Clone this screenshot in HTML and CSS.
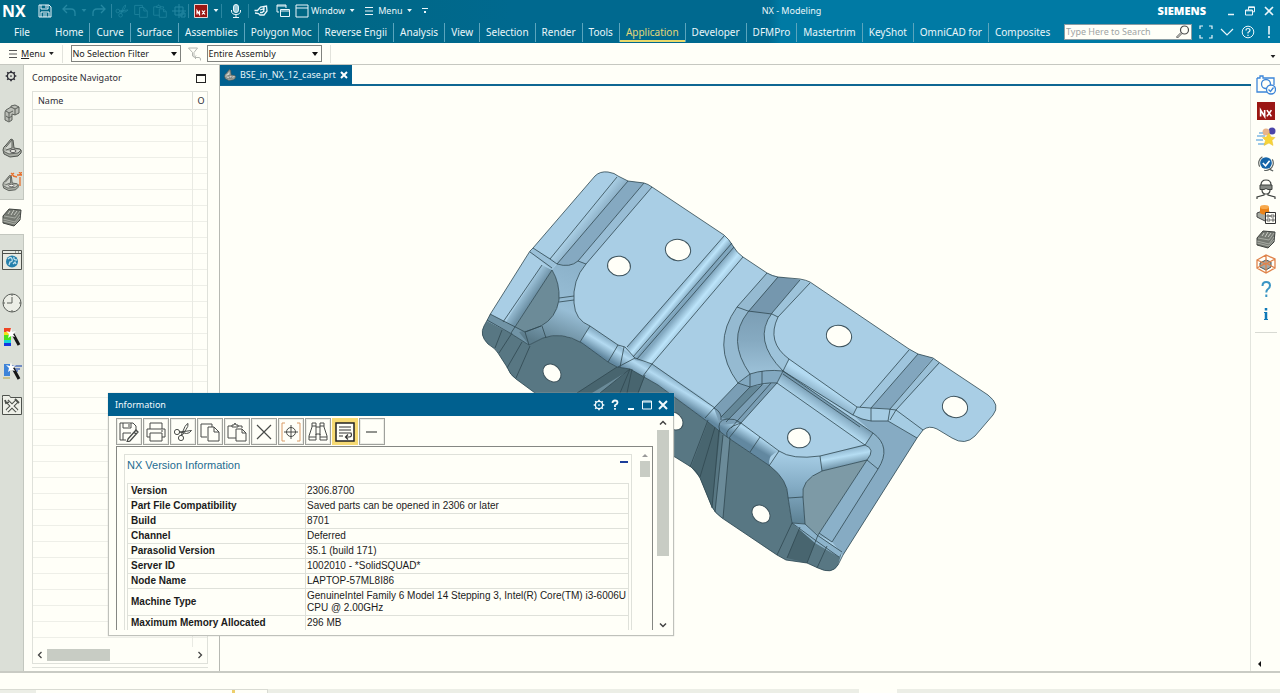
FILE: index.html
```html
<!DOCTYPE html>
<html lang="en">
<head>
<meta charset="utf-8">
<title>NX - Modeling</title>
<link rel="stylesheet" href="styles.css">
</head>
<body>
<svg class="defs" aria-hidden="true">
  <defs>
    <symbol id="gear" viewBox="0 0 14 14"><circle cx="7" cy="7" r="4.2" fill="none" stroke="currentColor" stroke-width="1.5"/><circle cx="7" cy="7" r="1" fill="currentColor"/><path d="M7 .8v2M7 11.2v2M.8 7h2M11.2 7h2M2.6 2.6l1.4 1.4M10 10l1.4 1.4M2.6 11.4L4 10M10 4l1.4-1.4" stroke="currentColor" stroke-width="1.9"/></symbol>
    <symbol id="copy" viewBox="0 0 20 20"><path d="M12 5V2H1v13h6" fill="none" stroke="currentColor"/><path d="M8 5h6l5 5v9H8zM14 5v5h5" fill="none" stroke="currentColor"/></symbol>
    <symbol id="paste" viewBox="0 0 20 20"><path d="M9 16H1V4h4M11 4h4v2M5 5V3h2l1-2 1 2h2v2z" fill="none" stroke="currentColor"/><path d="M9 7h6l4 4v8H9zM15 7v4h4" fill="none" stroke="currentColor"/></symbol>
    <symbol id="cut" viewBox="0 0 20 20"><circle cx="4" cy="10" r="2.6" fill="none" stroke="currentColor"/><circle cx="8" cy="16" r="2.6" fill="none" stroke="currentColor"/><path d="M6.500 10l12-1.500q-2 3-5 3L6.500 10M8 13.500l4-9q2-3 3-3 .5 3-2 6l-4 6" fill="none" stroke="currentColor"/></symbol>
    <symbol id="target" viewBox="0 0 20 20"><path d="M4 1H1v18h3M16 1h3v18h-3" fill="none" stroke="#d99b66"/><circle cx="10" cy="10" r="4.500" fill="none" stroke="currentColor"/><path d="M10 3v14M3 10h14" stroke="currentColor"/></symbol>
    <symbol id="bracket" viewBox="0 0 20 20"><path d="M1 12Q1 9 4 7L9 1l2 1 1 8 6 1q2 1 1 4l-3 3-8 1-6-3z" fill="#a8aca4" stroke="#50544f"/><path d="M4 9l6-7v8l-6 2M1 13l6 3 9-1 3-3" fill="#d0d3cc" stroke="#60645f"/><ellipse cx="11" cy="13" rx="3" ry="1.500" fill="#f0f1ea" stroke="#555"/></symbol>
    <symbol id="laminate" viewBox="0 0 20 20"><path d="M1 9L7 2l12 1-1 10-6 6-11-3z" fill="#757972" stroke="#3f433f"/><path d="M2 9l11 2 5-7M1 12l12 3 5-7M1 14l12 3 5-6" fill="none" stroke="#b4b8af" stroke-width=".8"/><path d="M6 7l2-3M9 8l3-5M12 8l3-4" stroke="#c9ccc4"/></symbol>
    <symbol id="wand" viewBox="0 0 20 20"><path d="M11 7l6 11" stroke="#161616" stroke-width="3"/><path d="M9 1l1 4 4-1-3 3 2 3-4-1-3 2 1-4-3-3 4 1z" fill="#fff"/></symbol>
    <symbol id="nxmark" viewBox="0 0 20 20"><path d="M0 0h20v20H0z" fill="#9b1713"/><path d="M4 16V9l4.500 7V9M11 9l5 7M16 9l-5 7" fill="none" stroke="#fff" stroke-width="1.800"/></symbol>
  </defs>
</svg>

<header class="chrome">
  <div class="titlebar">
    <span class="brand">NX</span>
    <button class="tool wide" aria-label="Save"><svg class="i14" viewBox="0 0 14 14"><path d="M1 1h10l2 2v10H1zM3 1v4h7V1M8 1v3M3 13V8h8v5M5 10h4M5 12h4" fill="none" stroke="currentColor"/></svg></button>
    <button class="tool wide dim" aria-label="Undo"><svg class="i14" viewBox="0 0 14 14"><path d="M5 1L1 5l4 4M1 5h8q4 0 4 4v3" fill="none" stroke="currentColor" stroke-width="1.300"/></svg></button>
    <span class="caret dim"></span>
    <button class="tool wide dim" aria-label="Redo"><svg class="i14" viewBox="0 0 14 14"><path d="M9 1l4 4-4 4M13 5H5Q1 5 1 9v3" fill="none" stroke="currentColor" stroke-width="1.300"/></svg></button>
    <span class="bar"></span>
    <button class="tool dim" aria-label="Cut"><svg class="i14"><use href="#cut"/></svg></button>
    <button class="tool dim" aria-label="Copy"><svg class="i14"><use href="#copy"/></svg></button>
    <button class="tool dim" aria-label="Paste"><svg class="i14"><use href="#paste"/></svg></button>
    <button class="tool dim" aria-label="Repeat command"><svg class="i14" viewBox="0 0 14 14"><path d="M7 0v14M0 7h14M3 3h8v8H3zM9 9h4v4H9z" fill="none" stroke="currentColor"/></svg></button>
    <span class="bar"></span>
    <button class="tool wide" aria-label="NX"><svg class="i14" viewBox="0 0 14 14"><path d="M.5.5h13v13H.5z" fill="#9b1713" stroke="#e9d5d2"/><path d="M3 10.500v-4l2.500 4v-4M8 6.500l3 4M11 6.500l-3 4" fill="none" stroke="#fff" stroke-width="1.200"/></svg></button>
    <span class="caret"></span>
    <span class="bar gap"></span>
    <button class="tool wide" aria-label="Voice"><svg class="i14" viewBox="0 0 14 14"><rect x="4.500" y=".5" width="5" height="8" rx="2.500" fill="#9ccbd8" stroke="currentColor"/><path d="M2.500 6v1q0 3.500 4.500 3.500T11.500 7V6M7 10.500V13M4 13.500h6" fill="none" stroke="currentColor"/></svg></button>
    <span class="bar"></span>
    <button class="tool wide" aria-label="Touch mode"><svg class="i14" viewBox="0 0 14 14"><path d="M.5 6.500h3l3-3.500 6-1 .5 5-3 4H6L4.500 9.500 1 9M6 6l3-1 1 2-2 1.500H6M10 3v3" fill="none" stroke="currentColor" stroke-width="1.300"/></svg></button>
    <button class="tool" aria-label="Switch window"><svg class="i14" viewBox="0 0 14 14"><path d="M3 8H1V1h9v3M1 2h9M4.500 5.500h9v7h-9zM4 7h10" fill="none" stroke="currentColor"/></svg></button>
    <button class="tool" aria-label="Window"><svg class="i14" viewBox="0 0 14 14"><path d="M1 1h12v12H1zM1 4h12" fill="none" stroke="currentColor"/></svg></button>
    <button class="textbtn">Window <span class="caret"></span></button>
    <button class="textbtn"><svg class="i10" viewBox="0 0 10 10"><path d="M1 1.500h8M1 5h8M1 8.500h8" stroke="currentColor"/></svg> Menu <span class="caret"></span></button>
    <span class="caret over"></span>
    <span class="apptitle">NX - Modeling</span>
    <strong class="maker">SIEMENS</strong>
    <div class="winctl">
      <button aria-label="Minimize"><svg class="i10" viewBox="0 0 10 10"><path d="M2 8.500h6" stroke="currentColor" stroke-width="1.500"/></svg></button>
      <button aria-label="Restore"><svg class="i10" viewBox="0 0 10 10"><path d="M3.500 4V.8h6v5H7.500M.5 4h7v5h-7zM.5 4.800h7M3.500 1.500h6" fill="none" stroke="currentColor"/></svg></button>
      <button aria-label="Close"><svg class="i10" viewBox="0 0 10 10"><path d="M1 1l8 8M9 1L1 9" stroke="currentColor" stroke-width="1.600"/></svg></button>
    </div>
  </div>
  <nav class="ribbon">
    <button class="tab file">File</button>
    <button class="tab">Home</button>
    <button class="tab">Curve</button>
    <button class="tab">Surface</button>
    <button class="tab">Assemblies</button>
    <button class="tab">Polygon Moc</button>
    <button class="tab">Reverse Engii</button>
    <button class="tab">Analysis</button>
    <button class="tab">View</button>
    <button class="tab">Selection</button>
    <button class="tab">Render</button>
    <button class="tab">Tools</button>
    <button class="tab on">Application</button>
    <button class="tab">Developer</button>
    <button class="tab">DFMPro</button>
    <button class="tab">Mastertrim</button>
    <button class="tab">KeyShot</button>
    <button class="tab">OmniCAD for</button>
    <button class="tab last">Composites</button>
    <div class="search">
      <input type="search" placeholder="Type Here to Search" aria-label="Search commands">
      <svg class="i14" viewBox="0 0 14 14"><circle cx="8.500" cy="5" r="4" fill="none" stroke="#4c4c4c" stroke-width="1.200"/><path d="M6 8.500l-4.500 4.500L.5 12 5 7.500" fill="none" stroke="#4c4c4c"/></svg>
    </div>
    <div class="ribctl">
      <button aria-label="Full screen"><svg class="i14" viewBox="0 0 14 14"><path d="M4 1H1v3M10 1h3v3M4 13H1v-3M10 13h3v-3" fill="none" stroke="currentColor" stroke-width="1.200"/></svg></button>
      <button aria-label="Collapse ribbon"><svg class="i14" viewBox="0 0 14 14"><path d="M1 4l6 6 6-6" fill="none" stroke="currentColor" stroke-width="1.200"/></svg></button>
      <button aria-label="Help"><svg class="i14" viewBox="0 0 14 14"><circle cx="7" cy="7" r="5.800" fill="none" stroke="currentColor"/><path d="M5 5.500q0-2 2-2t2 1.800Q9 6.500 7 7.500v1M7 9.800v1.200" fill="none" stroke="currentColor" stroke-width="1.200"/></svg></button>
      <button aria-label="Alerts"><svg class="i14" viewBox="0 0 14 14"><path d="M7 1v8.500M7 11v2" stroke="currentColor" stroke-width="1.600"/></svg></button>
    </div>
  </nav>
</header>

<div class="selbar">
  <button class="menubtn"><svg class="i10" viewBox="0 0 10 10"><path d="M1 1.500h8M1 5h8M1 8.500h8" stroke="#555"/></svg><span><u>M</u>enu</span><span class="caret"></span></button>
  <span class="vbar"></span>
  <span class="combo"><select aria-label="Type filter"><option>No Selection Filter</option></select></span>
  <svg class="i14 funnel" viewBox="0 0 14 14"><path d="M.5 1h9L6 5.500V10L4.500 9V5.500zM8 8.500l-1.500 2L8 12M7 10.500h4q2 0 1.500 3" fill="none" stroke="#b4b6b0"/></svg>
  <span class="combo"><select aria-label="Selection scope"><option>Entire Assembly</option></select></span>
  <span class="vbar"></span>
  <span class="caret end"></span>
</div>

<main class="work">
  <aside class="rail">
    <button aria-label="Settings" class="first"><svg class="i12"><use href="#gear"/></svg></button>
    <button aria-label="Assembly Navigator"><svg class="i20" viewBox="0 0 20 20"><path d="M4 6l5-3 0-1 4-1 4 2v6l-4 2-3-1v6l-3 2-4-2V8z" fill="#b9bcb5" stroke="#5c605b"/><path d="M4 7l3 2 4-2M7 9v8M4 12l3 2 3-2M9 3l4 2 4-2M13 5v6" fill="none" stroke="#5c605b"/></svg></button>
    <button aria-label="Part Navigator"><svg class="i20"><use href="#bracket"/></svg></button>
    <button aria-label="Constraint Navigator"><svg class="i20" viewBox="0 0 20 20"><use href="#bracket" y="2" width="17" height="18"/><path d="M9 1l3 3M12 1L9 4M15 3h5M17 0l3 3M20 0l-3 3M18 5v9M11 4l4 1" stroke="#e8722f" stroke-width="1.300"/></svg></button>
    <button aria-label="Composite Navigator" class="active"><svg class="i20"><use href="#laminate"/></svg></button>
    <button aria-label="Web browser" class="web"><svg class="i20" viewBox="0 0 20 20"><path d="M.5.5h19v19H.5z" fill="#e8eae2" stroke="#4e524d"/><path d="M1 3.500h18M13 2h1M16 2h1" stroke="#4e524d"/><circle cx="10" cy="11.500" r="6" fill="#2480ac"/><path d="M6 9q3-3 4 0t-2 3l-1 3M12 7q-1 3 3 3M11 14l2-2 1 2" fill="none" stroke="#bfe0ec" stroke-width="1.300"/></svg></button>
    <button aria-label="History" class="history"><svg class="i20" viewBox="0 0 20 20"><circle cx="10" cy="10" r="9" fill="#eceee6" stroke="#5a5e59"/><path d="M10 4v6H5M10 1v2M10 17v2M1 10h2M17 10h2" fill="none" stroke="#5a5e59"/></svg></button>
    <button aria-label="Materials"><svg class="i20" viewBox="0 0 20 20"><path d="M2 1h7v4H2z" fill="#ef4423"/><path d="M2 5h7v3H2z" fill="#f5e11a"/><path d="M2 8h7v5H2z" fill="#4be31e"/><path d="M2 13h7v3H2z" fill="#18d4d8"/><path d="M2 16h7v3H2z" fill="#1634e0"/><use href="#wand" width="20" height="20"/></svg></button>
    <button aria-label="Process Studio"><svg class="i20" viewBox="0 0 20 20"><path d="M2 3h6v12H2z" fill="#3e84d8"/><path d="M9 5h11M10 8h8M11 10h5" stroke="#5173bd" stroke-width="1.500"/><path d="M1 17h7" stroke="#c9c28e" stroke-width="2"/><use href="#wand" width="20" height="20"/></svg></button>
    <button aria-label="Roles"><svg class="i20" viewBox="0 0 20 20"><path d="M.5 2.500V.5h7l1 2h11v17H.5z" fill="#eef0e8" stroke="#4e524d"/><path d="M5 6l10 10M15 6L5 16" stroke="#4e524d" stroke-width="4"/><path d="M5 6l10 10M15 6L5 16" stroke="#f6f7f0" stroke-width="1.800"/><path d="M3 5l1 3 3-1M13 4l4 4" fill="none" stroke="#4e524d" stroke-width="1.800"/></svg></button>
  </aside>

  <section class="navigator">
    <h2>Composite Navigator <button aria-label="Undock"></button></h2>
    <div class="tree">
      <table><thead><tr><th>Name</th><th class="o">O</th></tr></thead></table>
      <div class="rows"><span></span></div>
      <div class="hscroll"><svg viewBox="0 0 6 8"><path d="M4.500 1L1.500 4l3 3" fill="none" stroke="#444" stroke-width="1.300"/></svg><i></i><svg viewBox="0 0 6 8"><path d="M1.500 1l3 3-3 3" fill="none" stroke="#444" stroke-width="1.300"/></svg></div>
    </div>
  </section>

  <section class="stage">
    <div class="doctabs"><button class="doc"><svg class="i12"><use href="#bracket"/></svg>BSE_in_NX_12_case.prt<svg class="i8" viewBox="0 0 8 8"><path d="M1 1l6 6M7 1L1 7" stroke="#fff" stroke-width="2"/></svg></button></div>
    <div class="canvas">
      <svg class="part" viewBox="480 170 520 405" role="img" aria-label="Sheet metal part">
        <defs>
          <path id="body" d="M595 176Q600 171 608 172 615 173 618 176L628 181 644 183Q648 184 652 187L724 235Q729 239 733 246 737 253 743 257L767 273Q772 276 778 277L800 279Q806 280 810 282L909 349 918 354 933 358 940 363 988 395Q1001 405 993 415L975 436Q965 446 952 438L937 429Q929 425 923 430L917 438 843 555 838 565Q832 575 818 568L807 563 786 560 777 555 722 518Q715 513 712 507L700 478Q697 471 691 467L675 457 600 430 535 393 516 379Q510 375 507 367L498 353Q496 349 488 344 479 335 484 326L491 313 530 251 533 248Z"/>
          <linearGradient id="fold" gradientUnits="userSpaceOnUse" x1="676" y1="380" x2="667" y2="395"><stop offset="0" stop-color="#8db4cc"/><stop offset=".35" stop-color="#b3daf1"/><stop offset="1" stop-color="#6288a0"/></linearGradient>
          <linearGradient id="chan" gradientUnits="userSpaceOnUse" x1="584" y1="218" x2="594" y2="226"><stop offset="0" stop-color="#a9cee4"/><stop offset="1" stop-color="#88abc2"/></linearGradient>
          <linearGradient id="bead" gradientUnits="userSpaceOnUse" x1="675" y1="291" x2="699" y2="311"><stop offset="0" stop-color="#8cb2ca"/><stop offset=".2" stop-color="#bce4fa"/><stop offset=".42" stop-color="#7fa5bd"/><stop offset=".55" stop-color="#82a8c0"/><stop offset=".8" stop-color="#bce4fa"/><stop offset="1" stop-color="#a2c8df"/></linearGradient>
          <linearGradient id="leftw" gradientUnits="userSpaceOnUse" x1="522" y1="292" x2="532" y2="299"><stop offset="0" stop-color="#a5cbe2"/><stop offset="1" stop-color="#6f93a8"/></linearGradient>
          <linearGradient id="blend" gradientUnits="userSpaceOnUse" x1="575" y1="270" x2="545" y2="345"><stop offset="0" stop-color="#8db3cb"/><stop offset=".5" stop-color="#98bed6"/><stop offset="1" stop-color="#5b7b8a"/></linearGradient>
          <linearGradient id="arc" gradientUnits="userSpaceOnUse" x1="755" y1="290" x2="755" y2="375"><stop offset="0" stop-color="#7496ad"/><stop offset=".6" stop-color="#86aac1"/><stop offset="1" stop-color="#9dc2d9"/></linearGradient>
          <linearGradient id="rim" gradientUnits="userSpaceOnUse" x1="828" y1="402" x2="820" y2="414"><stop offset="0" stop-color="#7296ac"/><stop offset=".4" stop-color="#8fb5cc"/><stop offset="1" stop-color="#b3daf0"/></linearGradient>
          <linearGradient id="ridge" gradientUnits="userSpaceOnUse" x1="824" y1="386" x2="818" y2="396"><stop offset="0" stop-color="#b3daf1"/><stop offset="1" stop-color="#86abc2"/></linearGradient>
          <linearGradient id="yblend" gradientUnits="userSpaceOnUse" x1="800" y1="456" x2="798" y2="525"><stop offset="0" stop-color="#a4cbe3"/><stop offset=".45" stop-color="#83abc4"/><stop offset="1" stop-color="#5b7f91"/></linearGradient>
          <linearGradient id="arm" gradientUnits="userSpaceOnUse" x1="843" y1="450" x2="846" y2="466"><stop offset="0" stop-color="#93bad2"/><stop offset=".4" stop-color="#b5ddf3"/><stop offset="1" stop-color="#7195aa"/></linearGradient>
        </defs>
        <use href="#body" fill="#a9cee5"/>
        <path fill="url(#chan)" d="M617 176L628 181 557 264 550 259z"/>
        <path fill="#85a9c1" d="M628 181L644 183 578 261 570 266 557 264z"/>
        <path fill="#98bdd5" d="M644 183L652 187 586 264 578 261z"/>
        <path fill="#9ac0d8" d="M533 248L557 262 552 270 530 252z"/>
        <path fill="url(#leftw)" d="M542 265L552 270 511 333 502 328z"/>
        <path fill="#6c8b98" d="M552 270Q560 283 559 300 556 318 541 326L525 332 511 333z"/>
        <path fill="#587783" d="M487 321L510 333 529 345 543 338Q562 331 582 343L608 362 617 367 630 369 658 385 708 422 727 437 770 466Q788 480 788 497L792 523 805 526 817 535 842 552 838 565Q832 575 818 568L807 563 786 560 777 555 722 518Q715 513 712 507L700 478Q697 471 691 467L675 457 600 430 535 393 516 379Q510 375 507 367L498 353Q496 349 488 344 479 335 484 326z"/>
        <path fill="#7194a6" d="M490 314L525 332 529 345 510 333 487 321z"/>
        <path fill="#48656f" d="M617 367L630 369 645 375 638 395 577 393zM708 422L720 432 712 508 700 478 691 467zM800 527L818 536 807 563 787 558z"/>
        <path fill="#6b8b99" d="M628 371L600 393 592 393zM723 435L730 438 723 518 715 512z"/>
        <path fill="url(#blend)" d="M557 264L570 266 578 261 586 264Q572 280 574 303 575 320 590 326L580 342Q562 331 543 338L529 345 519 332 541 326Q556 318 559 300 560 283 552 270z"/>
        <path fill="url(#fold)" d="M590 326L618 345 635 358 652 364 703 398 715 408 741 423 779 451Q766 456 770 466L727 437 708 422 658 385 630 369 617 367 608 362 580 342z"/>
        <path fill="url(#bead)" d="M724 236Q729 239 733 246 737 253 743 257L652 364 635 360 627 347z"/>
        <path fill="#95bad1" d="M767 273L778 277 748 312Q726 340 750 374L738 383Q710 345 737 307z"/>
        <path fill="url(#arc)" d="M778 277L800 280 772 313Q752 340 783 371L762 371 750 374Q726 340 748 312z"/>
        <path fill="#7597ae" d="M778 277L800 280 772 313 748 312z"/>
        <path fill="#9dc3da" d="M800 280L810 283 778 317Q766 342 789 359L783 371Q752 340 772 313z"/>
        <path fill="url(#ridge)" d="M789 359L857 407 853 416 783 371z"/>
        <path fill="#86abc3" d="M853 415L871 421 888 421 917 438 843 555 832 542 884 455 873 433z"/>
        <path fill="#9fc5dd" d="M909 349L918 354 871 408 860 407z"/>
        <path fill="#82a6be" d="M918 354L933 358 890 409 871 408z"/>
        <path fill="#9ac0d7" d="M933 358L940 363 896 410 890 409z"/>
        <path fill="#a5cce3" d="M857 407L870 408 888 409 896 410 923 430 917 438 888 421 871 421 853 416z"/>
        <path fill="#83a9c1" d="M738 383L750 374 762 371 783 371 777 383 762 385 750 387z"/>
        <path fill="#7a9eb5" d="M738 383L750 387 762 385 777 383 741 423 720 425 714 408z"/>
        <path fill="#648798" d="M750 387L762 385 728 420 721 417z"/>
        <path fill="url(#rim)" d="M783 371L873 433 865 445 777 383z"/>
        <path fill="#8eb4cb" d="M873 433Q892 447 878 469L867 460Q874 452 865 445z"/>
        <path fill="#7d9aa6" d="M867 460L822 471Q800 480 803 497L805 525 818 535z"/>
        <path fill="#8bb1c9" d="M867 460L878 469 832 542 818 535z"/>
        <path fill="url(#yblend)" d="M779 451Q792 460 820 456L822 471Q800 480 803 497L805 524 792 523 788 497Q788 480 770 466z"/>
        <path fill="url(#arm)" d="M820 456L865 444Q876 449 867 460L822 471z"/>
        <path fill="#8db4cc" d="M792 523L805 524 818 535 842 552 839 557 815 543z"/>
        <g fill="none" stroke="#304750" stroke-width=".8">
          <use href="#body"/>
          <path d="M617 177L550 259M628 181L557 264M644 183L578 261M652 187L586 264M533 248L550 259 557 264Q570 268 578 261L586 264M530 252L552 268M542 265L503 322M552 270L511 333M552 270Q560 283 559 300 556 318 541 326L525 332M586 264Q572 280 574 303 575 320 590 326M559 298L574 296M559 302L574 300"/>
          <path d="M490 314L525 332 541 326M487 320L510 333 529 345 543 338Q562 331 582 343L608 362 617 367 630 369 658 385 708 422 727 437 770 466Q788 480 788 497L792 523 777 555M525 332L529 345M542 326L546 338M502 330L495 348M512 333L499 353M522 342L507 368M530 346L516 378"/>
          <path d="M590 326L618 345 625 347 635 358 652 364 715 408M590 326L580 342M618 345L608 362M624 347L620 367M635 358L618 367M652 364L643 376M617 367L577 393M630 369L600 393M630 369L620 393M632 369L627 393M645 375L638 393"/>
          <path d="M724 236L627 347M732 243L633 357M734 247L637 359M743 257L652 364"/>
          <path d="M767 273L737 307Q710 345 738 383L714 408M778 277L748 312Q726 340 750 374M800 280L772 313Q752 340 783 371M810 283L778 317Q766 342 789 359L857 407 870 408 888 409 896 410 923 430M737 307L748 311 772 314 778 317M789 359L783 371 853 415 862 419 871 421 888 421 917 438M857 407L853 415M871 408V421M890 409L888 421M896 410L890 420"/>
          <path d="M909 350L860 407M918 354L871 408M933 359L890 409M939 363L896 410M738 383L750 374Q765 369 783 371L777 383Q765 382 750 387zM750 374V387M762 371V385M750 387L721 417M762 385L726 422M771 383L731 428M777 383L741 423M777 383L865 445M783 371L873 433Q892 447 878 469L832 542M783 374L860 427"/>
          <path d="M714 408Q722 412 721 420M714 408L705 418M720 432Q716 420 727 419 735 418 741 423L760 437 779 451Q792 460 820 456L865 445 873 433M727 437Q724 428 741 423M741 423L729 438M760 437L750 452M779 451L769 466M820 456L822 471M865 445Q876 449 867 460L822 471Q800 480 803 497L805 524 792 523M867 460L878 469M867 460L818 535M788 498L803 497M805 524L817 535 842 552M792 523L815 540 839 557"/>
          <path d="M708 420L690 467M715 427L700 477M719 430L712 508M723 435L715 512M730 438L723 518M800 527L787 558M818 535L807 563M827 546L817 568M819 533L832 542"/>
        </g>
        <g fill="#fffff8" stroke="#3c525c">
          <ellipse cx="619" cy="266" rx="11.500" ry="9.800" transform="rotate(10 619 266)"/><ellipse cx="678" cy="250" rx="12.700" ry="10.600" transform="rotate(10 678 250)"/><ellipse cx="839" cy="336" rx="12.700" ry="10.700" transform="rotate(12 839 336)"/><ellipse cx="955" cy="407" rx="12.700" ry="10.500" transform="rotate(12 955 407)"/><ellipse cx="799" cy="438" rx="11.500" ry="9.800" transform="rotate(10 799 438)"/><ellipse cx="552" cy="373" rx="10" ry="8" transform="rotate(45 552 373)"/><ellipse cx="761" cy="514" rx="10" ry="8" transform="rotate(45 761 514)"/><ellipse cx="674" cy="421" rx="10" ry="8" transform="rotate(45 674 421)"/>
        </g>
      </svg>
    </div>
  </section>

  <aside class="dock">
    <button aria-label="Capture"><svg class="i20" viewBox="0 0 20 20"><path d="M1 3h3V1h3v2h11v7M1 3v14h11" fill="none" stroke="#3d86d8" stroke-width="1.300"/><circle cx="10" cy="9" r="4.500" fill="none" stroke="#3d86d8" stroke-width="1.300"/><circle cx="15" cy="14.500" r="4.500" fill="#fffff8" stroke="#3d86d8" stroke-width="1.300"/><path d="M12.500 14.500l2 2 3-4" fill="none" stroke="#3d86d8" stroke-width="1.300"/></svg></button>
    <button aria-label="NX"><svg class="i18"><use href="#nxmark"/></svg></button>
    <button aria-label="Quick start"><svg class="i20" viewBox="0 0 20 20"><circle cx="16" cy="4" r="3.500" fill="#4b45a8"/><circle cx="10" cy="5" r="3.500" fill="#e8b48a"/><path d="M1 9h8M0 13h7M2 17h8M3 6h4" stroke="#7fb8e2" stroke-width="1.500"/><path d="M13 6l2 4 4 .5-3 3 1 5-4-2.500-5 2.500 1.500-5-3-3 4-.5z" fill="#f7d437" stroke="#e8be2e" stroke-width=".5"/></svg></button>
    <button aria-label="Validate"><svg class="i18" viewBox="0 0 20 20"><path d="M3 14A8 8 0 0 1 6 3M17 6a8 8 0 0 1-3 11M8 18q3 1 6-1l4 2" fill="none" stroke="#5a605e" stroke-width="1.300"/><circle cx="10" cy="10" r="6.500" fill="#1464a8"/><path d="M6.500 10l3 3 4.500-5.500" fill="none" stroke="#fff" stroke-width="1.800"/></svg></button>
    <button aria-label="Virtual reality"><svg class="i20" viewBox="0 0 20 20"><path d="M5 9V6q0-5 5-5t5 5v3M6 11q0 4 4 4t4-4M8 14v2L1 18v2M12 14v2l7 2v2" fill="none" stroke="#3e423e" stroke-width="1.200"/><path d="M4 6h12v4.500h-4L10 9.500 8 10.500H4z" fill="#858983" stroke="#3e423e"/></svg></button>
    <button aria-label="Options"><svg class="i20" viewBox="0 0 20 20"><path d="M1 9l8-3 6 3v5l-6 3-8-4z" fill="#a6aaa2" stroke="#444"/><path d="M4 3v6q4 3 9 0V3z" fill="#ea8319"/><ellipse cx="8.500" cy="3" rx="4.500" ry="2" fill="#f8a94c"/><path d="M9.500 8.500h10v11h-10z" fill="#fffff8" stroke="#333"/><path d="M11 11h2v2h-2zM15 11h3v2h-3zM11 15h3v2h-3zM16 15h2v2h-2zM13 12h2" fill="none" stroke="#333" stroke-width=".7"/></svg></button>
    <button aria-label="Laminate"><svg class="i20"><use href="#laminate"/></svg></button>
    <button aria-label="Envelope"><svg class="i20" viewBox="0 0 20 20"><path d="M4 9l6-3 5 2v5l-5 3-6-3z" fill="#a3aaa8" stroke="#4d5656"/><path d="M1 6l9-5 9 4v9l-9 5-9-5zM1 6l9 4 9-5M10 10v9M10 1v7M1 14l9-5 9 5" fill="none" stroke="#e0834a" stroke-width="1.300"/></svg></button>
    <button aria-label="Help"><svg class="i18" viewBox="0 0 18 18"><path d="M5.500 6q0-4 3.700-4T13 5.500Q13 8 10.500 9.500 9.300 10.500 9.300 12.500M9.300 14.500V17" fill="none" stroke="#3a95c4" stroke-width="2"/></svg></button>
    <button aria-label="Info"><svg class="i18" viewBox="0 0 18 18"><path d="M9 3v2.500M9 7v8" stroke="#0f79b8" stroke-width="2.500"/><path d="M7 7.500h2M7 14.500h4" stroke="#0f79b8"/></svg></button>
    <hr>
    <span class="leftcaret"></span>
  </aside>
</main>

<footer class="status"><span class="cue"></span><span class="msg"></span><span class="end"></span></footer>

<section class="dialog" role="dialog" aria-labelledby="dlg">
  <header><h2 id="dlg">Information</h2>
    <button aria-label="Dialog options"><svg class="i12"><use href="#gear"/></svg></button>
    <button aria-label="Help"><svg class="i12" viewBox="0 0 12 12"><path d="M3.500 4q0-2.500 2.500-2.500t2.500 2.300Q8.500 5.200 6 6.300V8M6 9v1.800" fill="none" stroke="currentColor" stroke-width="1.800"/></svg></button>
    <button aria-label="Minimize"><svg class="i12" viewBox="0 0 12 12"><path d="M3 10h6" stroke="currentColor" stroke-width="2"/></svg></button>
    <button aria-label="Maximize"><svg class="i12" viewBox="0 0 12 12"><path d="M1.500 2h9v8h-9zM1.500 3h9" fill="none" stroke="currentColor"/></svg></button>
    <button aria-label="Close"><svg class="i12" viewBox="0 0 12 12"><path d="M2 2l8 8M10 2l-8 8" stroke="currentColor" stroke-width="2"/></svg></button>
  </header>
  <div class="dbody">
    <div class="dmain">
      <div class="dtools">
        <button aria-label="Save As"><svg class="i20" viewBox="0 0 20 20"><path d="M1 1h13l3 3v4M1 1v17h6M4 1v5h8V1M10 2v3M4 18v-7h8" fill="none" stroke="currentColor"/><path d="M9 17l8-9 2 2-8 9-3 1zM15 10l2 2" fill="none" stroke="currentColor" stroke-width="1.300"/></svg></button>
        <button aria-label="Print"><svg class="i20" viewBox="0 0 20 20"><path d="M4 7V1h12v6M4 15H1V7h18v8h-3M4 11h12v8H4zM15 9h2" fill="none" stroke="currentColor"/></svg></button>
        <button aria-label="Cut"><svg class="i20"><use href="#cut"/></svg></button>
        <button aria-label="Copy"><svg class="i20"><use href="#copy"/></svg></button>
        <button aria-label="Paste"><svg class="i20"><use href="#paste"/></svg></button>
        <button aria-label="Delete"><svg class="i20" viewBox="0 0 20 20"><path d="M3 3l14 14M17 3L3 17" stroke="currentColor" stroke-width="1.200"/></svg></button>
        <button aria-label="Select all"><svg class="i20"><use href="#target"/></svg></button>
        <button aria-label="Find"><svg class="i20" viewBox="0 0 20 20"><path d="M4 1h4v4h4V1h4l0 4 3 9v4h-7v-6H8v6H1v-4l3-9zM1 15h7M12 15h7M4 4h4M12 4h4M8 5v8M12 5v8" fill="none" stroke="currentColor"/></svg></button>
        <button aria-label="Word wrap" class="on"><svg class="i20" viewBox="0 0 20 20"><path d="M1 1h18v18H1z" fill="#fffff8" stroke="#222" stroke-width="1.500"/><path d="M4 5h12M4 8h12M4 11h12q1.500 4-2 4h-3M13 12.500L10.500 15l2.500 2.500M4 14h4" fill="none" stroke="#333" stroke-width="1.200"/></svg></button>
        <button aria-label="Collapse all"><svg class="i20" viewBox="0 0 20 20"><path d="M4 10h11" stroke="currentColor" stroke-width="1.200"/></svg></button>
      </div>
      <div class="frame">
        <div class="report">
          <h3>NX Version Information <button aria-label="Collapse section"></button></h3>
          <table>
            <tr><th scope="row">Version</th><td>2306.8700</td></tr>
            <tr><th scope="row">Part File Compatibility</th><td>Saved parts can be opened in 2306 or later</td></tr>
            <tr><th scope="row">Build</th><td>8701</td></tr>
            <tr><th scope="row">Channel</th><td>Deferred</td></tr>
            <tr><th scope="row">Parasolid Version</th><td>35.1 (build 171)</td></tr>
            <tr><th scope="row">Server ID</th><td>1002010 - *SolidSQUAD*</td></tr>
            <tr><th scope="row">Node Name</th><td>LAPTOP-57ML8I86</td></tr>
            <tr><th scope="row">Machine Type</th><td>GenuineIntel Family 6 Model 14 Stepping 3, Intel(R) Core(TM) i3-6006U CPU @ 2.00GHz</td></tr>
            <tr><th scope="row">Maximum Memory Allocated</th><td>296 MB</td></tr>
          </table>
        </div>
        <div class="vs inner"><b></b><i></i></div>
      </div>
    </div>
    <div class="vs outer"><svg viewBox="0 0 8 6"><path d="M1 4.500l3-3 3 3" fill="none" stroke="#444" stroke-width="1.500"/></svg><i></i><svg viewBox="0 0 8 6"><path d="M1 1.500l3 3 3-3" fill="none" stroke="#444" stroke-width="1.500"/></svg></div>
  </div>
</section>
</body>
</html>
```

FILE: styles.css
```css
* { box-sizing: border-box; }
body {
  margin: 0;
  height: 100vh;
  overflow: hidden;
  display: flex;
  flex-direction: column;
  background: #fffff8;
  color: #2e2e36;
  font: 9px/12px "Noto Sans", "Open Sans", sans-serif;
}
button {
  margin: 0;
  padding: 0;
  border: 0;
  background: none;
  color: inherit;
  font: inherit;
  display: inline-flex;
  align-items: center;
  justify-content: center;
}
h2, h3 { margin: 0; font-weight: 400; }
svg { display: block; flex: none; }
.defs { position: absolute; width: 0; height: 0; }
.i8 { width: 8px; height: 8px; }
.i10 { width: 10px; height: 10px; }
.i12 { width: 12px; height: 12px; }
.i14 { width: 14px; height: 14px; }
.i18 { width: 18px; height: 18px; }
.i20 { width: 20px; height: 20px; }
.caret {
  width: 6px;
  height: 3px;
  flex: none;
  background: currentColor;
  clip-path: polygon(10% 0, 90% 0, 50% 100%);
}

/* Title bar and ribbon */
.chrome { color: #eaf6fa; background: linear-gradient(90deg, #006784 0 24%, #00698f 40% 60%, #007aa4 61%); }
.titlebar { position: relative; display: flex; align-items: center; height: 21px; }
.brand { width: 33px; padding-left: 2px; color: #fff; font-size: 16px; font-weight: 700; }
.tool { width: 19px; height: 20px; }
.wide { width: 24px; }
.dim { color: #2488a2; }
.bar { width: 1px; height: 14px; background: #2b87a1; }
.gap { margin: 0 2px; }
.textbtn { gap: 4px; margin-right: 9px; }
.over { border-top: 1px solid; height: 5px; clip-path: none; background: linear-gradient(currentColor, currentColor) center bottom / 2px 2px no-repeat; }
.apptitle { position: absolute; left: 0; right: 0; padding-left: 303px; text-align: center; pointer-events: none; }
.maker { margin-left: auto; margin-right: 20px; color: #fff; font: 800 11px "Open Sans", sans-serif; }
.winctl { display: flex; gap: 9px; margin-right: 6px; }
.ribbon { display: flex; align-items: center; height: 22px; font-size: 10px; }
.tab { flex: none; height: 19px; padding: 0 6px; border-right: 1px solid #5ba5bd; white-space: nowrap; }
.tab.file { padding: 0 19px 0 14px; border: 0; }
.tab.last { border: 0; }
.on { color: #e3d778; }
.tab.on { box-shadow: inset 0 -2px #e9d96b; }
.search { display: flex; align-items: center; flex: none; width: 128px; height: 16px; margin-left: auto; padding-right: 1px; background: #fffff8; border: 1px solid #8a9da4; }
.search input { flex: 1; min-width: 0; padding: 0 1px; border: 0; outline: 0; background: none; font: inherit; font-size: 9px; color: #333; }
.search input::placeholder { color: #a0a4a4; opacity: 1; }
.ribctl { display: flex; gap: 7px; padding: 0 4px 0 7px; }

/* Selection bar */
.selbar { display: flex; align-items: center; height: 22px; border-bottom: 1px solid #c6c8c1; color: #222; }
.menubtn { gap: 3px; margin-left: 8px; }
.vbar { width: 1px; height: 18px; margin: 0 8px; background: #e2e3dc; }
.combo { position: relative; width: 110px; height: 17px; }
.combo::after { content: ""; position: absolute; right: 4px; top: 7px; border: 3px solid transparent; border-top: 4px solid #111; }
.combo:nth-of-type(3) { width: 115px; }
.combo select { appearance: none; width: 100%; height: 17px; padding: 0; border: 1px solid #80827e; border-radius: 0; background: #fffff8; font: inherit; color: #222; }
.funnel { margin: 0 5px 0 7px; }
.caret.end { margin: 6px 4px 0 auto; }

/* Work area */
.work { flex: 1; min-height: 0; display: flex; }
.rail { width: 24px; flex: none; background: #dbdfd7; border-right: 1px solid #c3c7bf; display: flex; flex-direction: column; }
.rail button { flex: none; width: 24px; height: 34px; }
.rail .first { height: 22px; margin-bottom: 10px; padding-right: 3px; }
.rail .active { height: 36px; background: #fffff8; border: 1px solid #c3c7bf; border-width: 1px 0; }
.rail .web { margin-top: 8px; }
.rail .history { margin-top: 9px; }
.navigator { width: 196px; flex: none; display: flex; flex-direction: column; padding: 0 11px 7px 8px; border-right: 1px solid #b7b9b3; }
.navigator h2 { display: flex; justify-content: space-between; align-items: center; height: 26px; font-size: 9px; padding-right: 2px; }
.navigator h2 button { width: 10px; height: 9px; border: 1px solid #222; border-top-width: 2px; }
.tree { flex: 1; min-height: 0; display: flex; flex-direction: column; border: 1px solid #dfe1da; box-shadow: 0 3px #fffff8, 0 4px #dfe1da; }
.tree table { width: 100%; border-collapse: collapse; }
.tree th { height: 17px; padding: 1px 5px 0; text-align: left; font-weight: 400; border-bottom: 1px solid #dfe1da; }
.tree .o { width: 15px; padding: 1px 0 0 5px; border-left: 1px solid #dfe1da; }
.rows { flex: 1; background: repeating-linear-gradient(transparent 0 15px, #eeefe8 15px 16px); display: flex; }
.rows span { flex: 1; margin-right: 14px; border-right: 1px solid #e9eae3; }
.hscroll { display: flex; align-items: center; height: 16px; padding: 0 4px; gap: 4px; }
.hscroll svg { width: 6px; height: 8px; }
.hscroll i { width: 63px; height: 12px; margin-right: auto; background: #c8ccc4; }
.stage { flex: 1; min-width: 0; display: flex; flex-direction: column; }
.doctabs { height: 21px; border-bottom: 2px solid #0f6793; }
.doc { height: 20px; padding: 0 4px; gap: 4px; background: #00608f; color: #eaf6fa; }
.canvas { position: relative; flex: 1; overflow: hidden; border-right: 1px solid #e3e5de; }
.part { position: absolute; left: 260px; top: 84px; width: 520px; height: 405px; }
.dock { width: 29px; flex: none; display: flex; flex-direction: column; align-items: center; padding-top: 7px; }
.dock button { height: 25px; margin-bottom: 1px; }
.dock button:nth-of-type(n+5) { margin-bottom: 0; }
.dock hr { width: 22px; margin: 6px 0; border: 0; border-top: 1px solid #d8dad3; }
.leftcaret { margin: auto 12px 4px 0; border: 3px solid transparent; border-right-color: #111; border-left: 0; }

/* Status strip */
.status { height: 22px; flex: none; display: flex; align-items: flex-end; border-top: 2px solid #c9cbc4; }
.status span { height: 4px; background: #eceee6; }
.status .cue { width: 268px; border: solid #d9dbd3; border-width: 1px 1px 0 0; background: linear-gradient(90deg, #eceee6 36px, #fffff8 36px 232px, #edcf6b 232px 235px, #fffff8 235px); }
.status .msg { flex: 1; }
.status .end { width: 383px; margin-left: 38px; }

/* Information window */
.dialog { position: absolute; left: 108px; top: 393px; width: 566px; height: 243px; display: flex; flex-direction: column; background: #fffff8; border: solid #bfc1bb; border-width: 0 1px 1px; box-shadow: 0 0 1px #bbb; }
.dialog header { display: flex; align-items: center; height: 23px; margin: 0 -1px; padding: 0 5px 0 7px; gap: 4px; background: #00608f; color: #f2fafd; }
.dialog h2 { margin-right: auto; font-size: 9px; }
.dbody { flex: 1; min-height: 0; display: flex; padding: 2px 4px 5px 7px; }
.dmain { flex: 1; min-width: 0; display: flex; flex-direction: column; }
.dtools { display: flex; gap: 1px; margin-bottom: 1px; }
.dtools button { width: 26px; height: 27px; border: 1px solid #9fa19c; color: #484b48; box-shadow: inset 0 0 0 1px #ecede6; }
.dtools .on { background: #f6da73; border-color: #f6da73; box-shadow: none; }
.frame { flex: 1; min-height: 0; display: flex; overflow: hidden; border: 1px solid #858783; border-bottom: 0; padding: 7px 1px 0 7px; }
.report { flex: 1; min-width: 0; height: 260px; padding: 0 2px; border: 1px solid #dfe1da; font-family: "Liberation Sans", Arial, sans-serif; font-size: 10px; line-height: 12px; color: #1b1b1b; }
.report h3 { display: flex; justify-content: space-between; height: 28px; padding: 4px 1px 0 0; color: #246c91; font-size: 11px; line-height: 12px; }
.report h3 button { width: 8px; height: 2px; margin-top: 2px; background: #1c3e9a; }
.report table { width: 100%; border-collapse: collapse; }
.report th, .report td { padding: 1px 0 1px 1px; border: 1px solid #dfe1da; text-align: left; }
.report th { width: 178px; padding-left: 3px; }
.vs { display: flex; flex-direction: column; align-items: center; flex: none; }
.vs i { background: #c8ccc4; }
.inner { width: 12px; margin-left: 7px; }
.inner b { border: 3px solid transparent; border-bottom-color: #999; border-top: 0; margin-bottom: 4px; }
.inner i { width: 10px; height: 16px; }
.outer { width: 12px; margin-left: 4px; padding: 2px 0; gap: 4px; }
.outer svg { width: 8px; height: 6px; }
.outer i { width: 12px; height: 126px; margin-bottom: auto; }
```
